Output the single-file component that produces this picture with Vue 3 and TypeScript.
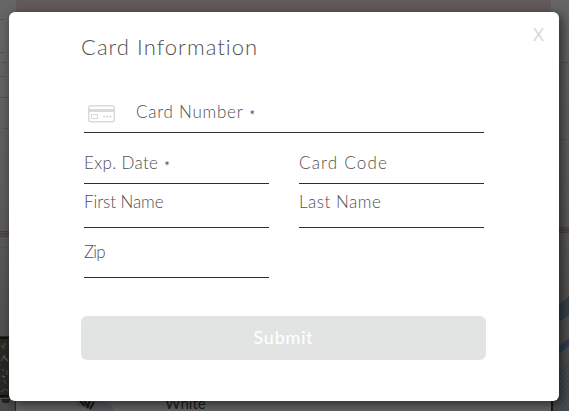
<script setup lang="ts">
interface Field {
  id: string
  label: string
  required?: boolean
  icon?: boolean
}

const fields: Field[] = [
  { id: 'number', label: 'Card Number', required: true, icon: true },
  { id: 'exp', label: 'Exp. Date', required: true },
  { id: 'code', label: 'Card Code' },
  { id: 'first', label: 'First Name' },
  { id: 'last', label: 'Last Name' },
  { id: 'zip', label: 'Zip' },
]
</script>

<template>
  <main class="page">
    <svg class="scene" width="569" height="411" viewBox="0 0 569 411" aria-hidden="true">
      <defs>
        <linearGradient id="wall" x1="0" y1="0" x2="0" y2="1">
          <stop offset="0" stop-color="#666" />
          <stop offset="0.5" stop-color="#5c5c5c" />
          <stop offset="0.63" stop-color="#595756" />
          <stop offset="1" stop-color="#484a4b" />
        </linearGradient>
        <pattern id="weave" width="4" height="5" patternUnits="userSpaceOnUse">
          <rect width="4" height="5" fill="#43494d" />
          <path d="M0 0L4 5" stroke="#50575b" stroke-width="0.8" />
        </pattern>
      </defs>
      <rect width="569" height="411" fill="url(#wall)" />
      <path d="M0 19.5H4M0 52.5H4M2 62.5H7M0 76.5H6M0 97.5H9M3 128.5H8M562 62.5H568M560 139.5H566M562 260.5H568M560 276.5H569M0 247.5H7M0 301.5H7" stroke="#555351" />
      <path d="M0 231.5H9M0 236.5H9M559 227.5H569M559 232.5H569" stroke="#48413e" />
      <path d="M0 234H9M559 230H569" stroke="#4c4542" stroke-width="3" />
      <rect x="16" width="535" height="12" fill="#655a5b" />
      <rect x="16" y="401" width="535" height="10" fill="#656565" />
      <path d="M559 305L569 296V315L559 322Z" fill="#38414b" />
      <path d="M559 346L569 338V346L559 354Z" fill="#303f50" />
      <path d="M559 369L569 362V411H551V401H559Z" fill="url(#weave)" />
      <path d="M552 401V411" stroke="#191919" stroke-width="2" />
      <rect y="336" width="10" height="62" fill="#292825" />
      <path d="M0 338H9M0 396H11" stroke="#11110f" stroke-width="2" />
      <path d="M1 345L4 348M5 343L3 349M1 361L5 355M7 370V375M2 369L4 371M4 380L6 384M1 392L5 389M6 389L8 391" stroke="#49463d" stroke-width="1.4" fill="none" />
      <path d="M3 356L8 361M2 376L5 377" stroke="#515962" stroke-width="1.5" />
      <path d="M1 399H10L9 403H3Z" fill="#1f2021" />
      <path d="M15.5 401V411" stroke="#292929" />
      <path d="M76 401H104L112 406L114 411H91L76 405Z" fill="#58595c" />
      <path d="M80 401L85 406M84 401L89 407M90 401L87 408M94 402L90 409" stroke="#171819" stroke-width="2" />
    </svg>
    <span class="product">White</span>

    <section class="modal">
      <header class="head">
        <h1 class="title">Card Information</h1>
        <button class="close" type="button">X</button>
      </header>
      <form class="form">
        <div v-for="f in fields" :key="f.id" class="field" :class="f.id">
          <svg v-if="f.icon" class="card-icon" width="27" height="18" viewBox="0 0 27 18">
            <rect x="0.75" y="0.75" width="25.5" height="16" rx="2" fill="none" stroke="#d9dadc" stroke-width="1.5" />
            <path d="M1 5.5H26" stroke="#d9dadc" stroke-width="3" />
            <rect x="3.5" y="9.5" width="6" height="4" fill="none" stroke="#d9dadc" />
            <path d="M15 11.5h2.4M18.2 11.5h2.4M21.4 11.5h2.4M16.2 10.3v2.4M19.4 10.3v2.4M22.6 10.3v2.4" stroke="#d9dadc" />
          </svg>
          <span class="label">{{ f.label }}</span>
          <span v-if="f.required" class="star">*</span>
        </div>
      </form>
      <button class="submit" type="button">Submit</button>
    </section>
  </main>
</template>

<style>
body { margin: 0; }
</style>

<style scoped>
.page {
  position: relative;
  box-sizing: border-box;
  width: 569px;
  height: 411px;
  padding: 12px 10px 10px 9px;
  overflow: hidden;
  font-family: "Century Gothic", "Lato", sans-serif;
  color: #505050;
}
.scene { position: absolute; inset: 0; display: block; }
.product {
  position: absolute;
  left: 165px;
  top: 395px;
  font-size: 15px;
  line-height: 17px;
  letter-spacing: 0;
  color: #1c1c1c;
}
.modal {
  position: relative;
  box-sizing: border-box;
  width: 550px;
  height: 389px;
  padding: 0 73px 0 72px;
  border-radius: 6px;
  background: #fff;
  box-shadow: 3px 3px 12px rgba(0, 0, 0, 0.6);
}
.head {
  display: flex;
  justify-content: space-between;
  height: 86px;
  margin-right: -58px;
}
.title {
  margin: 22px 0 0;
  font-size: 22px;
  line-height: 26px;
  font-weight: 300;
  letter-spacing: 1.05px;
  white-space: nowrap;
}
button { border: 0; padding: 0; font-family: inherit; }
.close {
  align-self: flex-start;
  margin-top: 13px;
  background: none;
  color: #d9d9d9;
  font-size: 17px;
  line-height: 20px;
}
.form {
  display: grid;
  grid-template-columns: 185px 185px;
  grid-template-rows: 35px 51px 44px 50px;
  column-gap: 30px;
  margin-left: 3px;
}
.field {
  display: flex;
  align-items: flex-end;
  box-sizing: border-box;
  border-bottom: 1px solid #2e2e2e;
  font-size: 17px;
  line-height: 20px;
  font-weight: 300;
  white-space: nowrap;
}
.number { grid-column: 1 / 3; padding-bottom: 9px; letter-spacing: 0.75px; }
.number .label, .exp .label { margin-bottom: 1px; }
.exp { padding-bottom: 9px; letter-spacing: 0.33px; }
.code { padding-bottom: 10px; letter-spacing: 1.2px; }
.first { padding-bottom: 15px; letter-spacing: -0.08px; }
.last { padding-bottom: 15px; letter-spacing: 0.5px; }
.zip { padding-bottom: 15px; letter-spacing: -0.8px; }
.card-icon { margin: 0 21px 0 4px; }
.star { margin: 0 0 -2px 6px; font-size: 13px; font-weight: 400; }
.submit {
  display: flex;
  align-items: center;
  justify-content: center;
  width: 405px;
  height: 44px;
  padding-bottom: 2px;
  margin-top: 38px;
  border-radius: 6px;
  background: #e2e4e3;
  color: #fff;
  font-size: 18px;
  letter-spacing: 0.8px;
}
</style>
